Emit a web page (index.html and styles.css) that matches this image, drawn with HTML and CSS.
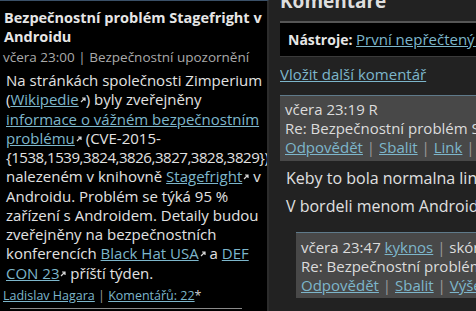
FILE: index.html
```html
<!DOCTYPE html>
<html lang="cs">
<head>
<meta charset="utf-8">
<link rel="stylesheet" href="styles.css">
</head>
<body>
<div class="page">
  <aside class="story">
    <h1 class="story-title">Bezpečnostní problém Stagefright v Androidu</h1>
    <div class="story-meta">včera 23:00 | Bezpečnostní upozornění</div>
    <p class="story-body">Na stránkách společnosti Zimperium (<a href="#">Wikipedie</a><svg class="ext" viewBox="0 0 6 6"><path d="M1 5L5 1M2 1H5V4" /></svg>) byly zveřejněny <a href="#">informace o vážném bezpečnostním problému</a><svg class="ext" viewBox="0 0 6 6"><path d="M1 5L5 1M2 1H5V4" /></svg> (CVE-2015-<span class="cve">{1538,1539,3824,3826,3827,3828,3829})</span> nalezeném v knihovně <a href="#">Stagefright</a><svg class="ext" viewBox="0 0 6 6"><path d="M1 5L5 1M2 1H5V4" /></svg> v Androidu. Problém se týká 95 % zařízení s Androidem. Detaily budou zveřejněny na bezpečnostních konferencích <a href="#">Black Hat USA</a><svg class="ext" viewBox="0 0 6 6"><path d="M1 5L5 1M2 1H5V4" /></svg> a <a href="#">DEF CON 23</a><svg class="ext" viewBox="0 0 6 6"><path d="M1 5L5 1M2 1H5V4" /></svg> příští týden.</p>
    <div class="story-foot"><a href="#">Ladislav Hagara</a> <span class="sep">|</span> <a href="#">Komentářů: 22</a>*</div>
    <div class="story-rule"></div>
  </aside>
  <main class="comments">
    <h2 class="comments-title">Komentáře</h2>
    <div class="tools"><b>Nástroje:</b> <a href="#">První nepřečtený komentář</a></div>
    <a class="add" href="#">Vložit další komentář</a>
    <div class="comment">
      <div class="c-head">
        <div>včera 23:19 R</div>
        <div>Re: Bezpečnostní problém Stagefright v Androidu</div>
        <div><a href="#">Odpovědět</a> <span class="sep">|</span> <a href="#">Sbalit</a> <span class="sep">|</span> <a href="#">Link</a> <span class="sep">|</span> <a href="#">Blokovat</a></div>
      </div>
      <p class="c-body">Keby to bola normalna linuxova distribucia</p>
      <p class="c-body">V bordeli menom Android sa to neopravi</p>
      <div class="comment nested">
        <div class="c-head">
          <div>včera 23:47 <a href="#">kyknos</a> <span class="sep">|</span> skóre: 22</div>
          <div>Re: Bezpečnostní problém Stagefright v Androidu</div>
          <div><a href="#">Odpovědět</a> <span class="sep">|</span> <a href="#">Sbalit</a> <span class="sep">|</span> <a href="#">Výše</a> <span class="sep">|</span> <a href="#">Link</a></div>
        </div>
      </div>
    </div>
  </main>
</div>
</body>
</html>
```
FILE: styles.css
```css
html, body {
  margin: 0;
  padding: 0;
  background: #222222;
  overflow: hidden;
}
body {
  font-family: "Open Sans", "Noto Sans", sans-serif;
  color: #dcdcdc;
  width: 476px;
  height: 311px;
}
a {
  color: #7db6cb;
  text-decoration: underline;
}
.sep {
  color: #9a9a9a;
}
.page {
  display: flex;
  align-items: flex-start;
  height: 311px;
}
.story {
  box-sizing: border-box;
  flex: 0 0 269px;
  width: 269px;
  height: 320px;
  background: #000;
  border-top: 1px solid #3a5068;
  border-right: 2px solid #2c2c2c;
  padding: 7px 3px 0 3px;
  overflow: hidden;
}
.story-title {
  margin: 0;
  font-size: 14.5px;
  line-height: 19px;
  font-weight: 700;
  color: #e6e6e6;
  padding-left: 1px;
}
.story-meta {
  margin-top: 2px;
  font-size: 13.5px;
  line-height: 18px;
  color: #aaaaaa;
}
.story-body {
  margin: 5px 0 0 3px;
  font-size: 15px;
  line-height: 19.25px;
  color: #e2e2e2;
}
.cve {
  letter-spacing: -0.45px;
}
.ext {
  width: 6px;
  height: 6px;
  margin-left: 1px;
  vertical-align: 2px;
}
.ext path {
  fill: none;
  stroke: #d8d8d8;
  stroke-width: 1.2;
}
.story-foot {
  margin-top: 4px;
  font-size: 12.5px;
  line-height: 18px;
  color: #cfcfcf;
}
.story-rule {
  margin: 3px 0 0 7px;
  width: 232px;
  height: 1px;
  background: #8a8a8a;
}
.comments {
  flex: 1;
  min-width: 0;
  margin-left: 11px;
  overflow: hidden;
  white-space: nowrap;
}
.comments-title {
  margin: -11px 0 0 0;
  font-size: 19px;
  line-height: 25px;
  font-weight: 700;
  color: #dedede;
}
.tools {
  margin-top: 7px;
  background: #000;
  border-top: 2px solid #555;
  border-bottom: 1px solid #3a3a3a;
  padding: 7px 8px 7px 8px;
  font-size: 14px;
  line-height: 18px;
  color: #dcdcdc;
}
.tools b {
  color: #e6e6e6;
}
.tools a {
  font-size: 15px;
}
.add {
  display: block;
  margin-top: 7px;
  font-size: 15px;
  line-height: 20px;
}
.comment {
  margin-top: 11px;
}
.c-head {
  background: #484848;
  border-top: 1px solid #5f7a8a;
  padding: 4px 5px;
  font-size: 15px;
  line-height: 19px;
  color: #dcdcdc;
}
.c-body {
  margin: 7px 0 0 6px;
  font-size: 16px;
  line-height: 20px;
  color: #e0e0e0;
}
.c-body + .c-body {
  margin-top: 8px;
}
.nested {
  margin: 16px 0 0 16px;
}
.nested .c-head {
  padding-top: 5px;
  padding-bottom: 3px;
}
```
